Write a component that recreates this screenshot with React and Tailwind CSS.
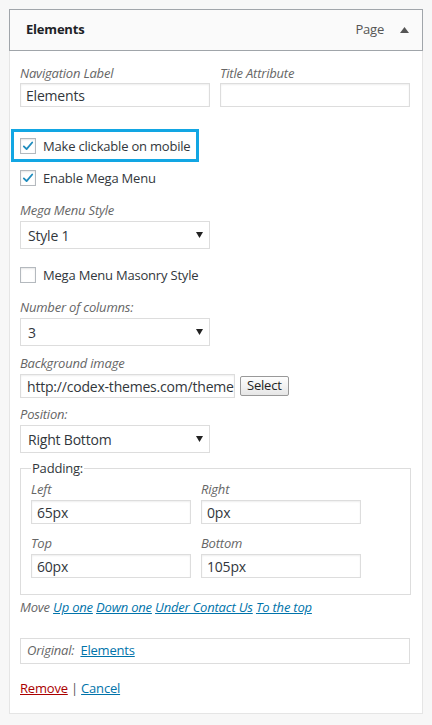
import React from "react";

const font = { fontFamily: '"Open Sans", "Noto Sans", sans-serif' };

function Check({ checked }) {
  return (
    <span className="flex h-[16px] w-[16px] shrink-0 items-center justify-center border border-[#b4b9be] bg-white shadow-[inset_0_1px_2px_rgba(0,0,0,0.1)]">
      {checked && (
        <svg width="14" height="14" viewBox="0 0 20 20">
          <path d="M4 10.5 L8 14.5 L16 5" fill="none" stroke="#1e8cbe" strokeWidth="2.6" strokeLinecap="round" strokeLinejoin="round" />
        </svg>
      )}
    </span>
  );
}

function Label({ children, className = "" }) {
  return <div className={`h-[18px] text-[13px] leading-[18px] italic text-[#666] ${className}`}>{children}</div>;
}

function Input({ value = "", className = "" }) {
  return (
    <div className={`flex h-[24px] items-center overflow-hidden whitespace-nowrap border border-[#ddd] bg-white pl-[5px] text-[14px] text-[#32373c] shadow-[inset_0_1px_2px_rgba(0,0,0,0.07)] ${className}`}>
      {value}
    </div>
  );
}

function Select({ value }) {
  return (
    <div className="mt-[2px] flex h-[28px] w-[190px] items-center justify-between border border-[#ddd] bg-white pl-[7px] pr-[6px] text-[14px] text-[#32373c]">
      <span>{value}</span>
      <svg width="7" height="6" viewBox="0 0 7 6">
        <path d="M0 0 H7 L3.5 6 Z" fill="#222" />
      </svg>
    </div>
  );
}

export default function App() {
  return (
    <div className="min-h-[725px] bg-[#f7f7f7] pl-[9px] pt-[9px] tracking-[-0.2px]" style={font}>
      <div className="w-[414px]">
        {/* Header */}
        <div className="flex h-[42px] items-center justify-between border border-[#a0a5aa] bg-[#fafafa] pl-[16px] pr-[13px]">
          <span className="text-[13px] font-bold text-[#1d2327]">Elements</span>
          <div className="flex items-center gap-[16px]">
            <span className="text-[13px] text-[#555]">Page</span>
            <svg width="9" height="6" viewBox="0 0 9 6">
              <path d="M0 6 L4.5 0 L9 6 Z" fill="#555" />
            </svg>
          </div>
        </div>
        {/* Body */}
        <div className="border-x border-b border-[#e5e5e5] bg-white pb-[16px] pl-[10px] pr-[12px] pt-[13px] text-[13px] text-[#32373c]">
          <div className="flex gap-[10px]">
            <div className="w-[190px]">
              <Label>Navigation Label</Label>
              <Input value="Elements" className="mt-[1px]" />
            </div>
            <div className="w-[190px]">
              <Label>Title Attribute</Label>
              <Input className="mt-[1px]" />
            </div>
          </div>

          <div className="-ml-[9px] mt-[22px] flex h-[33px] w-[188px] items-center gap-[7px] border-[3px] border-[#12a6e3] pl-[6px]">
            <Check checked />
            <span className="text-[13px] leading-[18px]">Make clickable on mobile</span>
          </div>

          <div className="mt-[8px] flex h-[16px] items-center gap-[7px]">
            <Check checked />
            <span className="text-[13px] leading-[18px]">Enable Mega Menu</span>
          </div>

          <Label className="mt-[15px]">Mega Menu Style</Label>
          <Select value="Style 1" />

          <div className="mt-[18px] flex h-[16px] items-center gap-[7px]">
            <Check />
            <span className="text-[13px] leading-[18px]">Mega Menu Masonry Style</span>
          </div>

          <Label className="mt-[15px]">Number of columns:</Label>
          <Select value="3" />

          <Label className="mt-[8px]">Background image</Label>
          <div className="mt-[2px] flex items-center gap-[5px]">
            <Input value="http://codex-themes.com/themes/" className="w-[215px] pl-[6px]" />
            <button className="flex h-[20px] items-center rounded-[2px] border border-[#999] bg-[linear-gradient(#fefefe,#e6e6e6)] px-[6px] text-[13px] text-[#222]">
              Select
            </button>
          </div>

          <Label className="mt-[7px]">Position:</Label>
          <Select value="Right Bottom" />

          <fieldset className="mt-[6px] w-[391px] border border-[#ddd] pb-[16px] pl-[10px]">
            <legend className="px-[1px] text-[13px] leading-[18px] text-[#32373c]">Padding:</legend>
            <div className="mt-[3px] flex gap-[10px]">
              <div className="w-[160px]">
                <Label>Left</Label>
                <Input value="65px" className="mt-[2px]" />
              </div>
              <div className="w-[160px]">
                <Label>Right</Label>
                <Input value="0px" className="mt-[2px]" />
              </div>
            </div>
            <div className="mt-[10px] flex gap-[10px]">
              <div className="w-[160px]">
                <Label>Top</Label>
                <Input value="60px" className="mt-[2px]" />
              </div>
              <div className="w-[160px]">
                <Label>Bottom</Label>
                <Input value="105px" className="mt-[2px]" />
              </div>
            </div>
          </fieldset>

          <div className="mt-[3px] h-[18px] text-[13px] italic leading-[18px] text-[#666]">
            Move{" "}
            <a className="text-[#0073aa] underline">Up one</a>{" "}
            <a className="text-[#0073aa] underline">Down one</a>{" "}
            <a className="text-[#0073aa] underline">Under Contact Us</a>{" "}
            <a className="text-[#0073aa] underline">To the top</a>
          </div>

          <div className="mt-[22px] flex h-[26px] w-[390px] items-center border border-[#ddd] pl-[6px] text-[13px]">
            <span className="italic text-[#666]">Original:</span>
            <a className="ml-[6px] text-[#0073aa] underline">Elements</a>
          </div>

          <div className="mt-[15px] h-[18px] text-[13px] leading-[18px] text-[#555]">
            <a className="text-[#a00] underline">Remove</a> |{" "}
            <a className="text-[#0073aa] underline">Cancel</a>
          </div>
        </div>
      </div>
    </div>
  );
}
